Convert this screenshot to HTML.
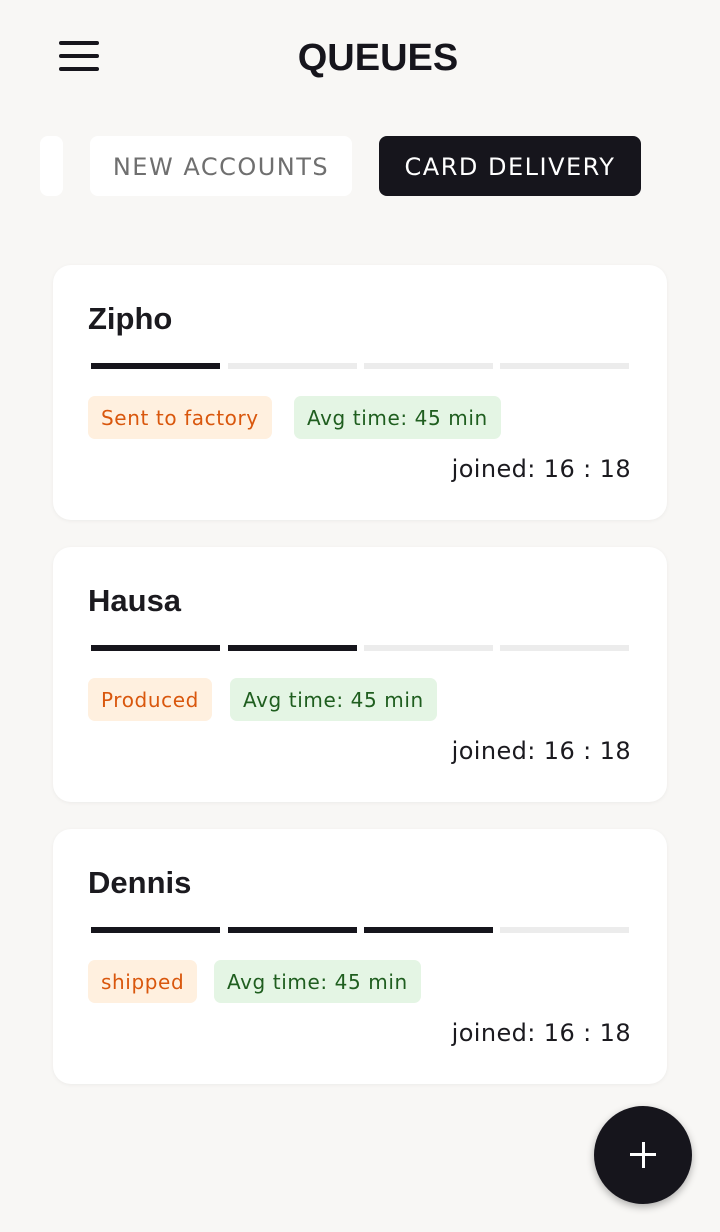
<!DOCTYPE html>
<html><head><style>
body{margin:0;width:720px;height:1232px;background:#f8f7f5;font-family:"DejaVu Sans","Liberation Sans",sans-serif;position:relative;overflow:hidden}
.a{position:absolute}
.menu span{position:absolute;left:0;width:40px;height:4px;background:#16151c;border-radius:2px}
.title{left:0;width:756px;top:37px;text-align:center;font:bold 38px "Liberation Sans",sans-serif;color:#16151c}
.tab{height:60px;border-radius:8px;top:136px;font-size:24px;line-height:62px;text-align:center;letter-spacing:1.5px}
.card{left:53px;width:614px;height:255px;background:#fff;border-radius:18px;box-shadow:0 1px 4px rgba(0,0,0,.05)}
.name{position:absolute;left:35px;top:36px;font:600 31px "Liberation Sans",sans-serif;color:#1b1a1f}
.seg{position:absolute;top:98px;width:129px;height:6px;background:#ececec}
.seg.on{background:#16151c}
.tag{position:absolute;top:131px;height:43px;line-height:45px;border-radius:7px;font-size:20px;padding:0 13px;letter-spacing:0.6px}
.o{background:#fff0df;color:#d9570d}
.g{background:#e4f5e4;color:#1f5e1f}
.j{position:absolute;right:36px;top:190px;font-size:24px;color:#1b1a1f;letter-spacing:0.4px}
</style></head><body>
<div class="a menu" style="left:59px;top:41px;width:40px;height:32px"><span style="top:0"></span><span style="top:13px"></span><span style="top:26px"></span></div>
<div class="a title">QUEUES</div>
<div class="a tab" style="left:40px;width:23px;background:#fff"></div>
<div class="a tab" style="left:90px;width:262px;background:#fff;color:#6f6f6f">NEW ACCOUNTS</div>
<div class="a tab" style="left:379px;width:262px;background:#16151c;color:#fff">CARD DELIVERY</div>

<div class="a card" style="top:265px"><div class="name">Zipho</div>
<div class="seg on" style="left:38px"></div><div class="seg" style="left:175px"></div><div class="seg" style="left:311px"></div><div class="seg" style="left:447px"></div>
<div class="tag o" style="left:35px">Sent to factory</div><div class="tag g" style="left:241px">Avg time: 45 min</div>
<div class="j">joined: 16 : 18</div></div>

<div class="a card" style="top:547px"><div class="name">Hausa</div>
<div class="seg on" style="left:38px"></div><div class="seg on" style="left:175px"></div><div class="seg" style="left:311px"></div><div class="seg" style="left:447px"></div>
<div class="tag o" style="left:35px">Produced</div><div class="tag g" style="left:177px">Avg time: 45 min</div>
<div class="j">joined: 16 : 18</div></div>

<div class="a card" style="top:829px"><div class="name">Dennis</div>
<div class="seg on" style="left:38px"></div><div class="seg on" style="left:175px"></div><div class="seg on" style="left:311px"></div><div class="seg" style="left:447px"></div>
<div class="tag o" style="left:35px">shipped</div><div class="tag g" style="left:161px">Avg time: 45 min</div>
<div class="j">joined: 16 : 18</div></div>

<div class="a" style="left:594px;top:1106px;width:98px;height:98px;border-radius:50%;background:#16151c;box-shadow:0 3px 8px rgba(0,0,0,.3)">
<div class="a" style="left:36px;top:47px;width:26px;height:3px;background:#fff"></div>
<div class="a" style="left:47.5px;top:36px;width:3px;height:26px;background:#fff"></div></div>
</body></html>
